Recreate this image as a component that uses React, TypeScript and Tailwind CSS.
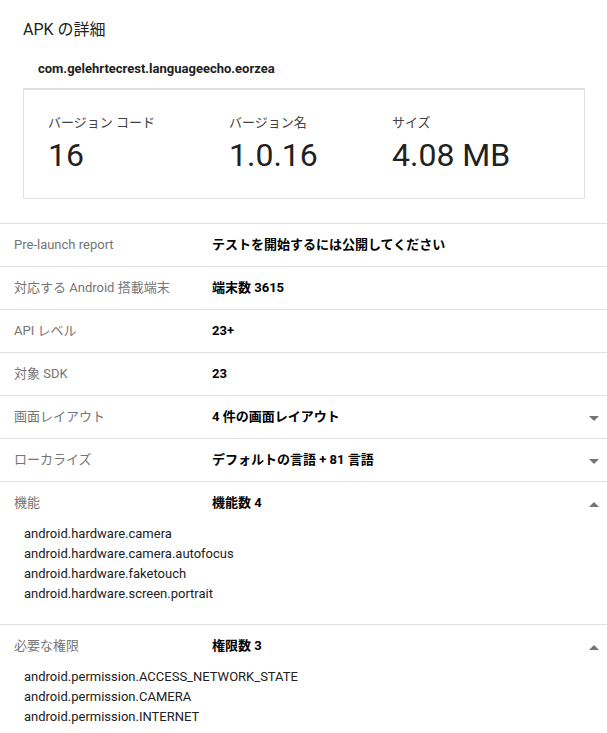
const rows = [
  ['Pre-launch report', 'テストを開始するには公開してください'],
  ['対応する Android 搭載端末', '端末数 3615'],
  ['API レベル', '23+'],
  ['対象 SDK', '23'],
];

function Arrow({ up }: { up?: boolean }) {
  return (
    <svg width="10" height="5" viewBox="0 0 10 5" className="absolute right-[8px] top-[20px]">
      <path d={up ? 'M0 5L5 0L10 5Z' : 'M0 0L5 5L10 0Z'} fill="#757575" />
    </svg>
  );
}

function Row({ label, value, arrow, items }: { label: string; value: string; arrow?: 'up' | 'down'; items?: string[] }) {
  return (
    <div className="relative border-t border-[#e0e0e0]">
      <div className="flex h-[42px] items-center pl-[14px] text-[13px]">
        <div className="w-[198px] text-[#757575]">{label}</div>
        <div className="font-bold text-black">{value}</div>
      </div>
      {arrow && <Arrow up={arrow === 'up'} />}
      {items && (
        <div className="pb-[20px] pl-6 text-[13px] leading-5 text-[#212121]">
          {items.map((i) => (
            <div key={i}>{i}</div>
          ))}
        </div>
      )}
    </div>
  );
}

function Stat({ label, value, width }: { label: string; value: string; width: string }) {
  return (
    <div className={width}>
      <div className="text-[13px] leading-4 text-[#424242]">{label}</div>
      <div className="mt-[5px] text-[32px] leading-[38px] text-[#212121]">{value}</div>
    </div>
  );
}

export default function App() {
  return (
    <div className="h-[733px] w-[607px] overflow-hidden bg-white font-['Roboto','Noto_Sans_CJK_JP',sans-serif]">
      <div className="pl-[23px] pr-[22px] pt-[20px]">
        <h2 className="text-[16px] leading-5 text-[#212121]">APK の詳細</h2>
        <div className="mt-[21px] pl-[15px] text-[13px] font-bold leading-4 text-[#212121]">com.gelehrtecrest.languageecho.eorzea</div>
        <div className="mt-[11px] flex h-[111px] rounded-[1px] border border-t-2 border-[#e0e0e0] pl-[24px] pt-[25px]">
          <Stat label="バージョン コード" value="16" width="w-[181px]" />
          <Stat label="バージョン名" value="1.0.16" width="w-[163px]" />
          <Stat label="サイズ" value="4.08 MB" width="w-[150px]" />
        </div>
      </div>
      <div className="mt-[24px]">
        {rows.map(([l, v]) => (
          <Row key={l} label={l} value={v} />
        ))}
        <Row label="画面レイアウト" value="4 件の画面レイアウト" arrow="down" />
        <Row label="ローカライズ" value="デフォルトの言語 + 81 言語" arrow="down" />
        <Row label="機能" value="機能数 4" arrow="up" items={['android.hardware.camera', 'android.hardware.camera.autofocus', 'android.hardware.faketouch', 'android.hardware.screen.portrait']} />
        <Row label="必要な権限" value="権限数 3" arrow="up" items={['android.permission.ACCESS_NETWORK_STATE', 'android.permission.CAMERA', 'android.permission.INTERNET']} />
      </div>
    </div>
  );
}
